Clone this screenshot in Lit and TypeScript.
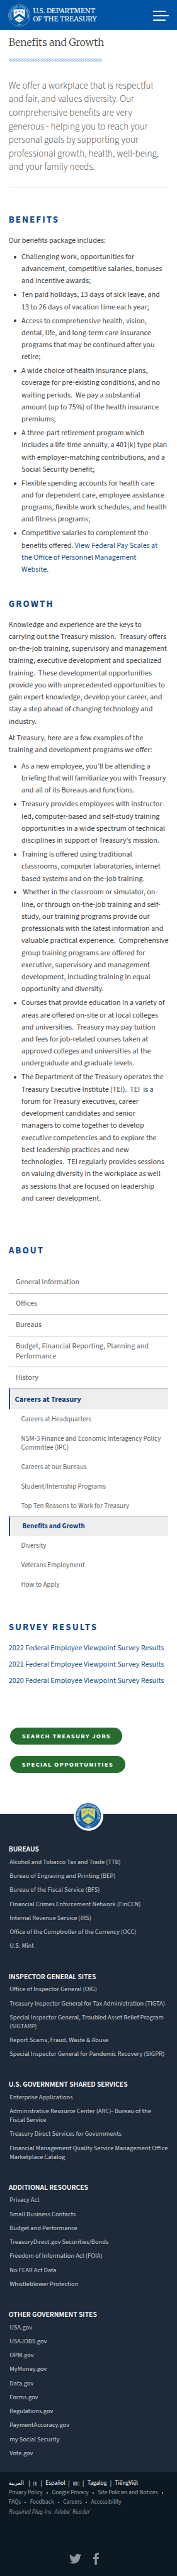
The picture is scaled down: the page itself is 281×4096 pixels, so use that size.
import { LitElement, html, css, svg, nothing } from "lit";
import { customElement, property } from "lit/decorators.js";
import { classMap } from "lit/directives/class-map.js";

const lines = (rows: unknown[]) => rows.map((r, i) => html`${i ? html`<br />` : nothing}${r}`);

const LEAD = [
  "We offer a workplace that is respectful",
  "and fair, and values diversity. Our",
  "comprehensive benefits are very",
  "generous - helping you to reach your",
  "personal goals by supporting your",
  "professional growth, health, well-being,",
  "and your family needs.",
];

const BENEFITS: unknown[][] = [
  ["Challenging work, opportunities for", "advancement, competitive salaries, bonuses", "and incentive awards;"],
  ["Ten paid holidays, 13 days of sick leave, and", "13 to 26 days of vacation time each year;"],
  ["Access to comprehensive health, vision,", "dental, life, and long-term care insurance", "programs that may be continued after you", "retire;"],
  ["A wide choice of health insurance plans,", "coverage for pre-existing conditions, and no", "waiting periods.\u00a0 We pay a substantial", "amount (up to 75%) of the health insurance", "premiums;"],
  ["A three-part retirement program which", "includes a life-time annuity, a 401(k) type plan", "with employer-matching contributions, and a", "Social Security benefit;"],
  ["Flexible spending accounts for health care", "and for dependent care, employee assistance", "programs, flexible work schedules, and health", "and fitness programs;"],
  [
    "Competitive salaries to complement the",
    html`benefits offered. <a>View Federal Pay Scales at</a>`,
    html`<a>the Office of Personnel Management</a>`,
    html`<a>Website.</a>`,
  ],
];

const GROWTH = [
  "Knowledge and experience are the keys to",
  "carrying out the Treasury mission.\u00a0 Treasury offers",
  "on-the-job training, supervisory and management",
  "training, executive development and specialized",
  "training.\u00a0 These developmental opportunities",
  "provide you with unprecedented opportunities to",
  "gain expert knowledge, develop your career, and",
  "stay a step ahead of changing technology and",
  "industry.",
];

const PROGRAMS = [
  ["As a new employee, you’ll be attending a", "briefing that will familiarize you with Treasury", "and all of its Bureaus and functions."],
  ["Treasury provides employees with instructor-", "led, computer-based and self-study training", "opportunities in a wide spectrum of technical", "disciplines in support of Treasury’s mission."],
  ["Training is offered using traditional", "classrooms, computer laboratories, internet", "based systems and on-the-job training."],
  ["\u00a0Whether in the classroom or simulator, on-", "line, or through on-the-job training and self-", "study, our training programs provide our", "professionals with the latest information and", "valuable practical experience.\u00a0 Comprehensive", "group training programs are offered for", "executive, supervisory and management", "development, including training in equal", "opportunity and diversity."],
  ["Courses that provide education in a variety of", "areas are offered on-site or at local colleges", "and universities.\u00a0 Treasury may pay tuition", "and fees for job-related courses taken at", "approved colleges and universities at the", "undergraduate and graduate levels."],
  ["The Department of the Treasury operates the", "Treasury Executive Institute (TEI).\u00a0 TEI\u00a0 is a", "forum for Treasury executives, career", "development candidates and senior", "managers to come together to develop", "executive competencies and to explore the", "best leadership practices and new", "technologies.\u00a0 TEI regularly provides sessions", "on valuing diversity in the workplace as well", "as sessions that are focused on leadership", "and career development."],
];

const NAV = [["General Information"], ["Offices"], ["Bureaus"], ["Budget, Financial Reporting, Planning and", "Performance"], ["History"]];
const SUBNAV = [
  ["Careers at Headquarters"],
  ["NSM-3 Finance and Economic Interagency Policy", "Committee (IPC)"],
  ["Careers at our Bureaus"],
  ["Student/Internship Programs"],
  ["Top Ten Reasons to Work for Treasury"],
  ["Benefits and Growth"],
  ["Diversity"],
  ["Veterans Employment"],
  ["How to Apply"],
];

const FOOTER: { title: string; items: string[][] }[] = [
  {
    title: "BUREAUS",
    items: [["Alcohol and Tobacco Tax and Trade (TTB)"], ["Bureau of Engraving and Printing (BEP)"], ["Bureau of the Fiscal Service (BFS)"], ["Financial Crimes Enforcement Network (FinCEN)"], ["Internal Revenue Service (IRS)"], ["Office of the Comptroller of the Currency (OCC)"], ["U.S. Mint"]],
  },
  {
    title: "INSPECTOR GENERAL SITES",
    items: [["Office of Inspector General (OIG)"], ["Treasury Inspector General for Tax Administration (TIGTA)"], ["Special Inspector General, Troubled Asset Relief Program", "(SIGTARP)"], ["Report Scams, Fraud, Waste & Abuse"], ["Special Inspector General for Pandemic Recovery (SIGPR)"]],
  },
  {
    title: "U.S. GOVERNMENT SHARED SERVICES",
    items: [["Enterprise Applications"], ["Administrative Resource Center (ARC)- Bureau of the", "Fiscal Service"], ["Treasury Direct Services for Governments"], ["Financial Management Quality Service Management Office", "Marketplace Catalog"]],
  },
  {
    title: "ADDITIONAL RESOURCES",
    items: [["Privacy Act"], ["Small Business Contacts"], ["Budget and Performance"], ["TreasuryDirect.gov Securities/Bonds"], ["Freedom of Information Act (FOIA)"], ["No FEAR Act Data"], ["Whistleblower Protection"]],
  },
  {
    title: "OTHER GOVERNMENT SITES",
    items: [["USA.gov"], ["USAJOBS.gov"], ["OPM.gov"], ["MyMoney.gov"], ["Data.gov"], ["Forms.gov"], ["Regulations.gov"], ["PaymentAccuracy.gov"], ["my Social Security"], ["Vote.gov"]],
  },
];

@customElement("treasury-seal")
export class TreasurySeal extends LitElement {
  @property() tone: "mono" | "color" = "mono";

  static styles = css`
    :host { display: block; }
    svg { display: block; width: 100%; height: 100%; overflow: visible; }
    text { font-family: "Merriweather", "DejaVu Serif", serif; font-weight: 700; }
  `;

  render() {
    const c = this.tone === "color"
      ? { disc: "#1560a6", line: "#e8f1f6", text: "#f2f7f9", shield: "#e2d75a", edge: "#bcd48a", mark: "#2d86c8", inner: "#0f4f93" }
      : { disc: "none", line: "#b5d2ec", text: "#d8e8f6", shield: "#ffffff", edge: "#ffffff", mark: "#0054a3", inner: "none" };
    return svg`<svg viewBox="0 0 100 100">
      <defs>
        <path id="top" d="M17.5 69 A37.7 37.7 0 1 1 82.5 69" fill="none"/>
        <path id="bottom" d="M31 91 A45 45 0 0 0 69 91" fill="none"/>
      </defs>
      <circle cx="50" cy="50" r="48.5" fill=${c.disc} stroke=${c.line} stroke-width="1.6"/>
      <circle cx="50" cy="50" r="35.5" fill=${c.inner} stroke=${c.line} stroke-width="1"/>
      <text font-size="8" fill=${c.text}><textPath href="#top" textLength="152">THE DEPARTMENT OF THE TREASURY</textPath></text>
      <text font-size="8.5" fill=${c.text} text-anchor="middle"><textPath href="#bottom" startOffset="50%">1789</textPath></text>
      <path d="M25 24 Q31 27 35 22 Q43 25 50 21.5 Q57 25 65 22 Q69 27 75 24 L74.5 58 Q73 71 50 80 Q27 71 25.5 58 Z" fill=${c.shield} stroke=${c.edge} stroke-width="1.5"/>
      <path d="M50 41 L75 59 L74 69 L50 52.5 L26 69 L25 59 Z" fill=${c.mark}/>
      <g fill="none" stroke=${c.mark} stroke-width="1.7">
        <path d="M33 31 H67 M50 26 V37 M35 31 L31 40 H39 Z M65 31 L61 40 H69 Z"/>
        <path d="M38 69 H60"/><circle cx="63" cy="69" r="2.6"/><path d="M40 69 V73"/>
      </g>
    </svg>`;
  }
}

@customElement("side-nav")
export class SideNav extends LitElement {
  static styles = css`
    :host { display: block; color: #5b5b5b; white-space: nowrap; }
    .item { padding: 12.1px 0 13.8px 16.5px; border-bottom: 1px solid #bdbdbd; font-size: 17.62px; line-height: 22.6px; }
    .parent { display: flex; align-items: center; height: 48px; padding-left: 11.5px; border-left: 4px solid #0b4a87; background: #eeeeee; font-size: 18.1px; font-weight: 700; color: #12447f; }
    .sub { padding: 12.85px 0 12.85px 29px; font-size: 16.15px; line-height: 20px; color: #636363; }
    .current { padding: 12.35px 0 12.35px 29.2px; border-top: 1px solid #c6c9c9; border-left: 4px solid #0b4a87; background: #eeeeee; font-weight: 700; color: #12447f; }
  `;

  render() {
    return html`
      ${NAV.map((n) => html`<div class="item">${lines(n)}</div>`)}
      <div class="parent">Careers at Treasury</div>
      ${SUBNAV.map((n) => html`<div class=${classMap({ sub: true, current: n[0] === "Benefits and Growth" })}>${lines(n)}</div>`)}
    `;
  }
}

@customElement("site-footer")
export class SiteFooter extends LitElement {
  static styles = css`
    :host { display: block; white-space: nowrap; }
    .links { box-sizing: border-box; height: 1533px; padding: 0 20px; background: #1e2939; color: #c6ccd2; }
    .seal { display: flex; justify-content: center; height: 72.3px; }
    .disc { box-sizing: border-box; width: 70px; height: 70px; margin-top: -30px; padding: 4px; border-radius: 50%; background: #fff; }
    h3 { margin: 0 0 6.1px; font-size: 17.2px; font-weight: 600; line-height: 24px; color: #fff; }
    .group { display: flex; flex-direction: column; gap: 12.2px; margin: 0 0 50.3px 2.3px; font-size: 15.2px; line-height: 20.4px; }
    .legal { box-sizing: border-box; height: 242px; padding: 15.7px 20px 0; background: #0c1822; color: #98a1a7; font-size: 13.8px; line-height: 22px; }
    .row { display: flex; align-items: center; height: 22px; gap: 9.2px; }
    .langs { gap: 7.5px; color: #fff; }
    .bar { width: 4px; text-align: center; }
    .ar { width: 38.5px; font-family: "DejaVu Sans", sans-serif; font-size: 13px; }
    .w45 { width: 45px; }
    .boxes { display: flex; gap: 1px; }
    .box { box-sizing: border-box; width: 4.2px; height: 9.5px; border: 1px solid #8a9299; }
    .dot { width: 3px; height: 3px; border-radius: 50%; background: #d5dadd; }
    .plug { gap: 7px; padding-left: 1px; font-style: italic; color: #8b959b; }
    sup { font-size: 8px; line-height: 0; vertical-align: 4px; }
    .social { display: flex; align-items: center; gap: 28px; height: 28px; margin: 84.7px 0 0 141px; fill: #8b979e; }
    .tw { width: 28px; height: 28px; }
    .fb { width: 13.5px; height: 28px; }
  `;

  private row(items: string[], trailing: boolean) {
    return html`<div class="row">${items.map((t, i) => html`<span>${t}</span>${i < items.length - 1 || trailing ? html`<i class="dot"></i>` : nothing}`)}</div>`;
  }

  private boxes(n: number) {
    return html`<span class="boxes">${Array.from({ length: n }, () => html`<i class="box"></i>`)}</span>`;
  }

  render() {
    const bar = html`<span class="bar">|</span>`;
    return html`
      <div class="links">
        <div class="seal"><div class="disc"><treasury-seal tone="color"></treasury-seal></div></div>
        ${FOOTER.map((g) => html`<h3>${g.title}</h3><div class="group">${g.items.map((t) => html`<div>${lines(t)}</div>`)}</div>`)}
      </div>
      <div class="legal">
        <div class="row langs">
          <span class="ar" lang="ar">العربية</span>${bar}${this.boxes(2)}${bar}<span class="w45">Español</span>${bar}${this.boxes(3)}${bar}<span class="w45">Tagalog</span>${bar}<span>TiếngViệt</span>
        </div>
        ${this.row(["Privacy Policy", "Google Privacy", "Site Policies and Notices"], true)}
        ${this.row(["FAQs", "Feedback", "Careers", "Accessibility"], false)}
        <div class="row plug"><span>Required Plug-ins</span><span>Adobe<sup>®</sup> Reader<sup>®</sup></span></div>
        <div class="social">
          <svg class="tw" viewBox="0 0 24 24"><path d="M23.95 4.57a10 10 0 0 1-2.82.77 4.96 4.96 0 0 0 2.16-2.72 9.9 9.9 0 0 1-3.12 1.18 4.92 4.92 0 0 0-8.38 4.48A13.9 13.9 0 0 1 1.64 3.16a4.9 4.9 0 0 0 1.52 6.57 4.9 4.9 0 0 1-2.23-.62v.06a4.92 4.92 0 0 0 3.95 4.83 5 5 0 0 1-2.21.08 4.94 4.94 0 0 0 4.6 3.42A9.87 9.87 0 0 1 0 19.54a14 14 0 0 0 7.55 2.21c9.05 0 14-7.5 14-13.98 0-.21 0-.42-.02-.63a9.9 9.9 0 0 0 2.46-2.55z"/></svg>
          <svg class="fb" viewBox="0 0 13.5 28"><path d="M13.5.2v4.5H10.9c-2 0-2.4 1-2.4 2.4v3h4.8l-.65 4.7H8.5V28H3.5V14.8H0v-4.7h3.5V6.6C3.5 2.4 6 0 9.8 0c1.8 0 3.2.1 3.7.2z"/></svg>
        </div>
      </div>
    `;
  }
}

@customElement("app-root")
export class AppRoot extends LitElement {
  static styles = css`
    :host { display: block; width: 281px; height: 4096px; overflow: hidden; background: #fff; }
    .page { zoom: 0.68278; width: 411.56px; font-family: "Source Sans 3", "Source Sans Pro", "Noto Sans CJK SC", sans-serif; color: #3e3e3e; white-space: nowrap; }
    header { box-sizing: border-box; display: flex; height: 71px; padding: 10px 19.5px 0; background: #0054a3; color: #fff; }
    .logo { width: 51.5px; height: 51.5px; }
    .brand { flex: 1; margin: 6.2px 0 0 5.8px; font-family: "Merriweather", "DejaVu Serif", serif; font-size: 15.87px; line-height: 19px; }
    .menu { display: flex; flex-direction: column; gap: 7.2px; width: 36px; margin-top: 14.8px; }
    .menu i { height: 3px; width: 29px; border-radius: 1px; background: #fff; }
    .menu .long { width: 36px; }
    main { height: 4153px; padding: 0 20px; }
    h1 { margin: 0; padding-top: 8.2px; font: 300 22.9px/40px "Merriweather", "DejaVu Serif", serif; color: #3a3a3a; }
    .stripe { width: 218px; height: 8px; margin-top: 16.8px; background: repeating-linear-gradient(145deg, #a3c3dd 0 1.7px, #e2eef7 1.7px 3.7px); }
    .lead { margin: 40px 0 30.6px; font-size: 22.07px; font-weight: 300; line-height: 31.7px; color: #3e3e3e; }
    .rule { height: 1.5px; background: #e9eaea; }
    h2 { margin: 60.7px 0 19.6px; font-size: 22px; font-weight: 700; line-height: 28px; letter-spacing: 3px; color: #12498a; }
    .growth { margin-top: 52.6px; }
    .about { margin: 94.2px 0 35.2px; }
    .survey { margin: 62px 0 20px; }
    p, ul { margin: 0 0 10px; padding: 0; font-size: 17.72px; line-height: 28.16px; }
    ul { display: flex; flex-direction: column; gap: 4px; margin: 0; list-style: none; }
    li { display: flex; padding-left: 12px; }
    li::before { content: ""; flex: none; width: 6px; height: 6px; margin: 11.4px 12px 0 0; border-radius: 50%; background: #333; }
    a { color: #14508f; }
    .surveys { display: flex; flex-direction: column; gap: 9.85px; font-size: 17.75px; line-height: 28.16px; }
    .buttons { display: flex; flex-direction: column; align-items: flex-start; gap: 26px; margin: 94.5px 0 0 4px; }
    .btn { box-sizing: border-box; height: 40px; padding: 0 0 0 27px; width: 260px; border-radius: 20px; background: #276d30; color: #fff; font-size: 15.4px; font-weight: 700; line-height: 41.5px; letter-spacing: 1.95px; }
    .wide { width: 268px; }
  `;

  render() {
    return html`
      <div class="page">
        <header>
          <treasury-seal class="logo"></treasury-seal>
          <div class="brand">U.S. DEPARTMENT<br />OF THE TREASURY</div>
          <div class="menu"><i></i><i class="long"></i><i></i></div>
        </header>
        <main>
          <h1>Benefits and Growth</h1>
          <div class="stripe"></div>
          <div class="lead">${lines(LEAD)}</div>
          <div class="rule"></div>
          <h2>BENEFITS</h2>
          <p>Our benefits package includes:</p>
          <ul>${BENEFITS.map((b) => html`<li><span>${lines(b)}</span></li>`)}</ul>
          <h2 class="growth">GROWTH</h2>
          <p>${lines(GROWTH)}</p>
          <p>${lines(["At Treasury, here are a few examples of the", "training and development programs we offer:"])}</p>
          <ul>${PROGRAMS.map((b) => html`<li><span>${lines(b)}</span></li>`)}</ul>
          <h2 class="about">ABOUT</h2>
          <side-nav></side-nav>
          <h2 class="survey">SURVEY RESULTS</h2>
          <div class="surveys">${["2022", "2021", "2020"].map((y) => html`<a>${y} Federal Employee Viewpoint Survey Results</a>`)}</div>
          <div class="buttons">
            <div class="btn">SEARCH TREASURY JOBS</div>
            <div class="btn wide">SPECIAL OPPORTUNITIES</div>
          </div>
        </main>
        <site-footer></site-footer>
      </div>
    `;
  }
}
